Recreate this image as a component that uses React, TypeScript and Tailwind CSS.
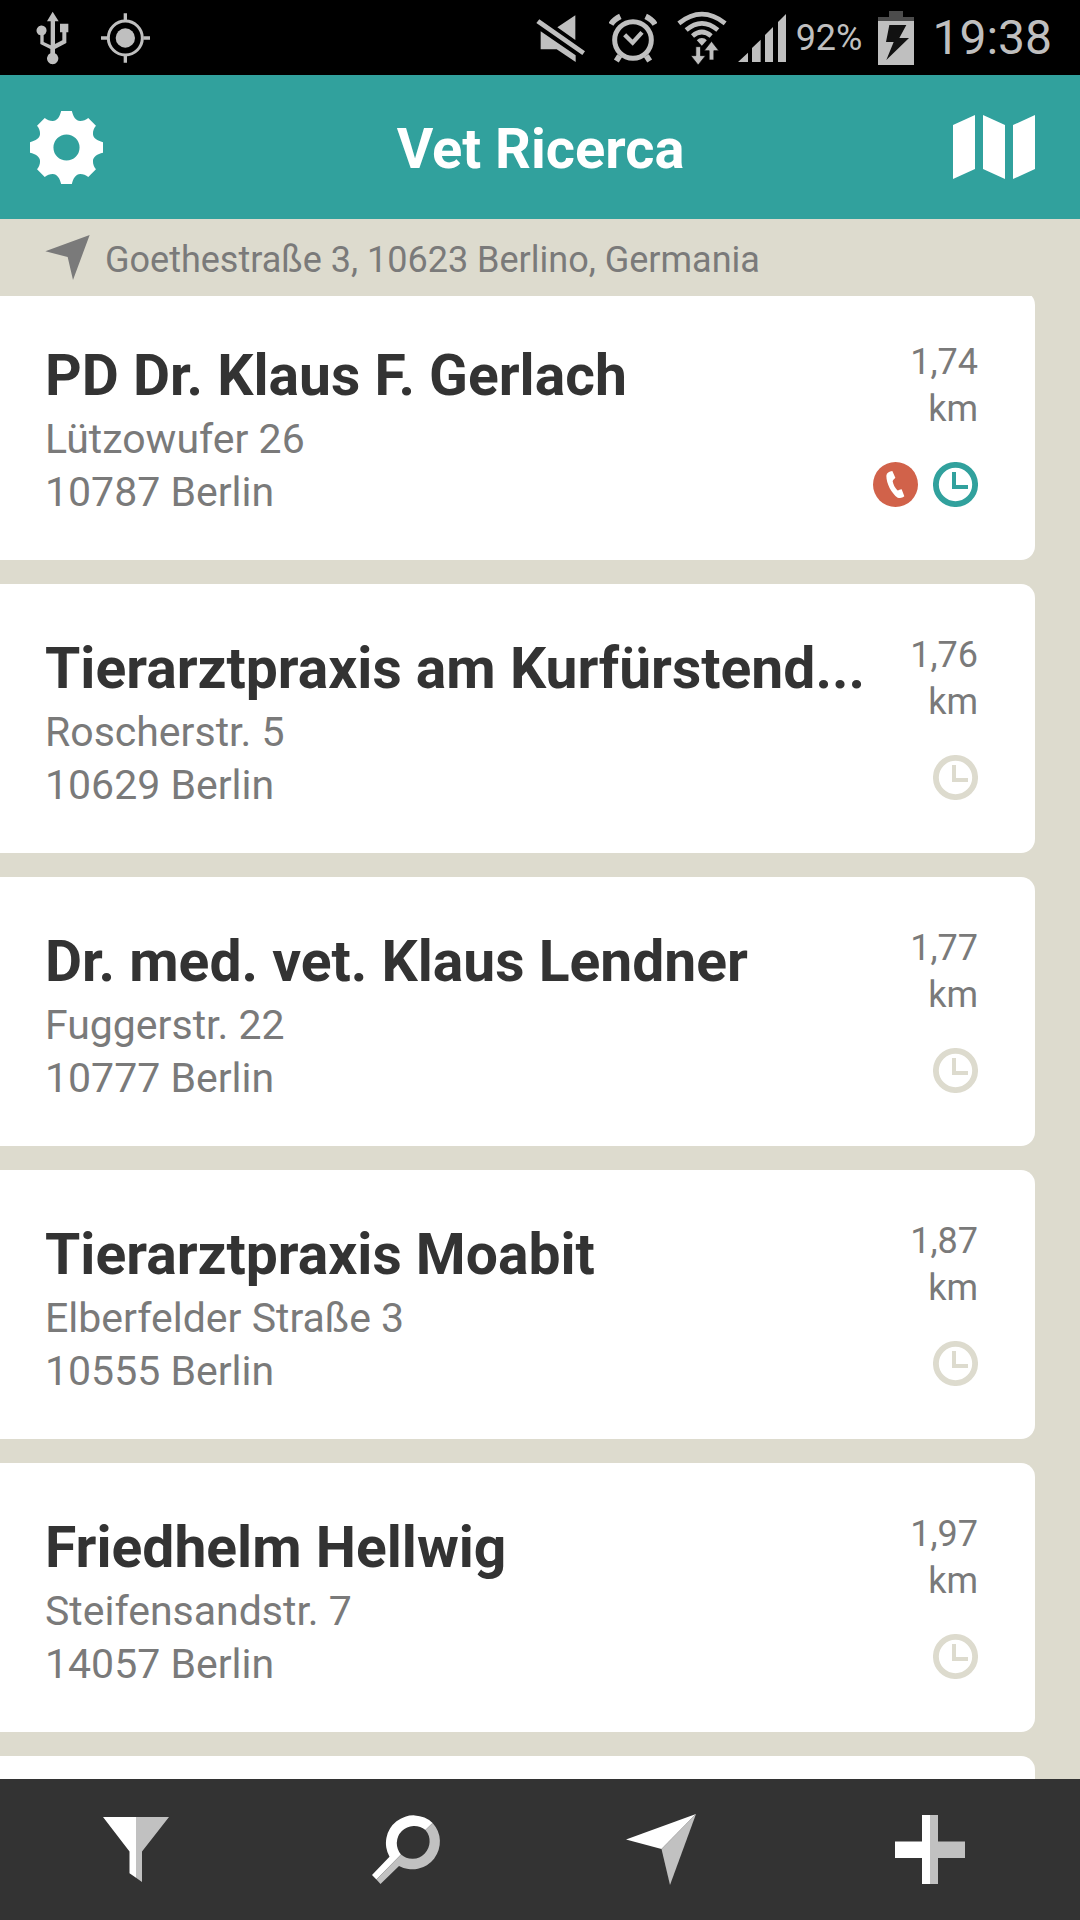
import type { ReactNode } from 'react'

type Vet = {
  name: string
  street: string
  city: string
  distance: string
  open?: boolean
  emergency?: boolean
}

const vets: Vet[] = [
  { name: 'PD Dr. Klaus F. Gerlach', street: 'Lützowufer 26', city: '10787 Berlin', distance: '1,74', open: true, emergency: true },
  { name: 'Tierarztpraxis am Kurfürstend...', street: 'Roscherstr. 5', city: '10629 Berlin', distance: '1,76' },
  { name: 'Dr. med. vet. Klaus Lendner', street: 'Fuggerstr. 22', city: '10777 Berlin', distance: '1,77' },
  { name: 'Tierarztpraxis Moabit', street: 'Elberfelder Straße 3', city: '10555 Berlin', distance: '1,87' },
  { name: 'Friedhelm Hellwig', street: 'Steifensandstr. 7', city: '14057 Berlin', distance: '1,97' },
]

const StatusBar = () => (
  <div className="flex h-[75px] shrink-0 items-center justify-between bg-black pl-9 pr-7 font-[Roboto,sans-serif] text-[#bfbfbf]">
    <div className="flex items-center gap-8">
      <svg className="h-[54px] w-[33px]" viewBox="108 33 99 162" fill="currentColor">
        <path d="M158 35l18 29h-11v68l22-11V97h-7V71h25v26h-6v32l-34 18v13a17 17 0 1 1-14 0v-13l-30-15v-26a15 15 0 1 1 10-1v21l21 10V64h-11z" />
      </svg>
      <svg className="h-[54px] w-[49px]" viewBox="303 32 147 162" fill="currentColor">
        <circle cx="376" cy="113" r="29" />
        <circle cx="376" cy="113" r="51" fill="none" stroke="currentColor" strokeWidth="9" />
        <path d="M371 39h10v20h-10zM371 167h10v20h-10zM303 108h20v10h-20zM430 108h20v10h-20z" />
      </svg>
    </div>
    <div className="flex items-center">
      <svg className="mr-6 h-[54px] w-[49px]" viewBox="52 30 147 162" fill="currentColor">
        <path d="M170 43v74l-54-38zM66 91l105 72v20l-57-38H66zM62 55l137 96-8 11L53 66z" />
      </svg>
      <svg className="mr-5 h-[54px] w-[48px]" viewBox="270 30 144 162" fill="none" stroke="currentColor">
        <circle cx="342" cy="117" r="55" strokeWidth="15" />
        <path d="M317 101l24 24 28-31" strokeWidth="13" />
        <path d="M302 164l-10 16M382 164l10 16" strokeWidth="17" />
        <path d="M276 70q9-15 28-24M408 70q-9-15-28-24" strokeWidth="17" />
      </svg>
      <svg className="mr-[11px] h-[54px] w-[50px]" viewBox="475 28 149 162" fill="none" stroke="currentColor">
        <path d="M480 65Q549 10 619 65M502 85Q549 45 597 85M521 103Q549 79 577 103" strokeWidth="14" />
        <path d="M549 109q9 0 15 7l-15 16-15-16q6-7 15-7z" fill="currentColor" stroke="none" />
        <path d="M531 135h14v27h15l-22 28-22-28h15zM571 175v-28h-15l22-28 22 28h-15v28z" fill="currentColor" stroke="#000" strokeWidth="2" />
      </svg>
      <svg className="mr-[10px] h-[54px] w-[48px]" viewBox="657 30 144 162" fill="currentColor">
        <path d="M657 183l30-28v28zM699 183v-42l26-25v67zM738 183v-81l24-24v105zM777 183V63l24-24v144z" />
      </svg>
      <span className="text-[36px] leading-none">92%</span>
      <svg className="ml-4 mr-[18px] h-[54px] w-[36px]" viewBox="291 27 108 162">
        <path d="M324 27h42v18h33v13H291V45h33z" fill="#4c4c4c" />
        <path d="M291 57h108v132H291z" fill="currentColor" />
        <path d="M325 69h51l-21 39h29l-68 66 22-54h-23z" fill="#111" />
      </svg>
      <span className="text-[48px] leading-none">19:38</span>
    </div>
  </div>
)

const GearIcon = () => (
  <svg className="size-[73px]" viewBox="-109 -109 218 218" fill="currentColor" fillRule="evenodd">
    <path d="M-16-109H16C20-92 28-79 41-79C50-79 58-82 65-88L88-65C82-58 79-50 79-41C79-28 92-20 109-16V16C92 20 79 28 79 41C79 50 82 58 88 65L65 88C58 82 50 79 41 79C28 79 20 92 16 109H-16C-20 92-28 79-41 79C-50 79-58 82-65 88L-88 65C-82 58-79 50-79 41C-79 28-92 20-109 16V-16C-92-20-79-28-79-41C-79-50-82-58-88-65L-65-88C-58-82-50-79-41-79C-28-79-20-92-16-109ZM0-39a39 39 0 1 0 0 78a39 39 0 1 0 0-78z" />
  </svg>
)

const MapIcon = () => (
  <svg className="h-16 w-[82px]" viewBox="0 0 82 64" fill="currentColor">
    <path d="M0 10L22 0V54L0 64zM30 0L52 10V64L30 54zM60 10L82 0V54L60 64z" />
  </svg>
)

const PhoneIcon = () => (
  <svg className="size-[45px]" viewBox="99 426 135 135" role="img" aria-label="Emergency">
    <circle cx="166.500" cy="493.500" r="67.500" fill="#d1624a" />
    <path d="M139 467C140 459 147 454 157 453L166 473C163 478 158 479 158 484C160 494 165 504 172 511C176 512 179 508 185 508L193 529C187 534 181 535 173 533C155 520 139 491 139 467z" fill="#fff" />
  </svg>
)

const ClockIcon = ({ open }: { open?: boolean }) => (
  <svg className={open ? 'size-[45px] text-[#31a19d]' : 'size-[45px] text-[#dddbce]'} viewBox="279 426 135 135" role="img" aria-label={open ? 'Open' : 'Closed'}>
    <circle cx="346.500" cy="493.500" r="58.800" fill="none" stroke="currentColor" strokeWidth="17.500" />
    <path d="M336 456h12v39h36v12h-48z" fill="currentColor" />
  </svg>
)

const VetCard = ({ vet }: { vet: Vet }) => (
  <li className="flex justify-between rounded-r-[14px] bg-white pb-[41px] pl-[45px] pr-[57px] pt-12 text-[#7a7a7a]">
    <div className="whitespace-nowrap text-[41px] leading-[53px]">
      <h2 className="text-[57px] font-bold leading-[74px] text-[#333]">{vet.name}</h2>
      <p>{vet.street}</p>
      <p>{vet.city}</p>
    </div>
    <div className="flex flex-col items-end">
      <p className="text-right text-[36px] leading-[47px]">
        {vet.distance}
        <br />
        km
      </p>
      <div className="mt-[29px] flex gap-[15px]">
        {vet.emergency && <PhoneIcon />}
        <ClockIcon open={vet.open} />
      </div>
    </div>
  </li>
)

const TabButton = ({ label, children }: { label: string; children: ReactNode }) => (
  <button type="button" aria-label={label} className="flex flex-1 items-center justify-center">
    <svg className="h-[71px] w-[100px]" viewBox="0 0 100 71">
      {children}
    </svg>
  </button>
)

const TabBar = () => (
  <nav className="flex h-[141px] shrink-0 bg-[#333]">
    <TabButton label="Filter">
      <path d="M18 3h33v60.800l-6.500-4.500V37.500z" fill="#fff" />
      <path d="M51 3h33L57 37.500V68l-6-4.200z" fill="#c1c1c1" />
    </TabButton>
    <TabButton label="Search">
      <path d="M77.600 8.900A27.700 27.700 0 0 0 34.500 42.700L17 61l4.400 4.500L46 40.500A17.300 17.300 0 0 1 70.400 16.100z" fill="#fff" />
      <path d="M77.600 8.900A27.700 27.700 0 0 1 44 52L25.500 70l-4.100-4.500L46 40.500A17.300 17.300 0 0 0 70.400 16.100z" fill="#c1c1c1" />
    </TabButton>
    <TabButton label="Locate">
      <path d="M1 25.500L71 0L36.500 35z" fill="#fff" />
      <path d="M71 0L45 71L36.500 35z" fill="#c1c1c1" />
    </TabButton>
    <TabButton label="Add">
      <path d="M0 27.500h27V1h8v69h-8V44H0z" fill="#fff" />
      <path d="M35 1h8v26.500h27V44H43v26h-8z" fill="#c1c1c1" />
    </TabButton>
  </nav>
)

const App = () => {
  return (
    <div className="flex h-screen flex-col overflow-hidden bg-[#dddbce] font-[Roboto,sans-serif]">
      <StatusBar />
      <header className="grid h-36 shrink-0 grid-cols-[1fr_auto_1fr] items-center bg-[#31a19d] pl-[30px] pr-[45px] text-white">
        <button type="button" aria-label="Settings" className="justify-self-start">
          <GearIcon />
        </button>
        <h1 className="pl-4 pt-1 text-[56px] font-bold leading-[72px]">Vet Ricerca</h1>
        <button type="button" aria-label="Map" className="justify-self-end">
          <MapIcon />
        </button>
      </header>
      <div className="z-10 flex h-[77px] shrink-0 items-center gap-[15px] bg-[#dddbce] pl-[45px] text-[36px] leading-[47px] text-[#7a7a7a]">
        <svg className="size-[45px]" viewBox="136 705 135 135" fill="currentColor">
          <path d="M137 754l133-49-50 135-16-69z" />
        </svg>
        <p className="pt-1.5">Goethestraße 3, 10623 Berlino, Germania</p>
      </div>
      <main className="min-h-0 flex-1 overflow-hidden">
        <ul className="-mt-[5px] flex flex-col gap-6 pr-[45px]">
          {vets.map((vet) => (
            <VetCard key={vet.name} vet={vet} />
          ))}
          <li className="h-[269px] rounded-r-[14px] bg-white" />
        </ul>
      </main>
      <TabBar />
    </div>
  )
}

export default App
